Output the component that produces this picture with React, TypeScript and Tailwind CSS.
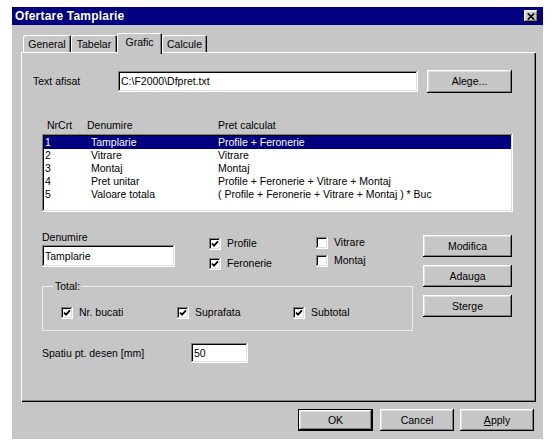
import type { ReactNode } from 'react'

// Win95-Optik: graue Fläche und 3D-Rahmen über Box-Shadows.
const FONT = "font-['Liberation_Sans',Arial,sans-serif]"
const DITHER = 'bg-[#c6c6c6]'
const RAISED =
  'shadow-[inset_-1px_-1px_#000,inset_1px_1px_#fff,inset_-2px_-2px_#808080,inset_2px_2px_#dfdfdf]'
const DEFAULT_BTN =
  'shadow-[inset_0_0_0_1px_#000,inset_-2px_-2px_#000,inset_2px_2px_#fff,inset_-3px_-3px_#808080,inset_3px_3px_#dfdfdf]'
const SUNKEN =
  'shadow-[inset_-1px_-1px_#fff,inset_1px_1px_#808080,inset_-2px_-2px_#dfdfdf,inset_2px_2px_#000]'

const ROWS: [string, string, string][] = [
  ['1', 'Tamplarie', 'Profile + Feronerie'],
  ['2', 'Vitrare', 'Vitrare'],
  ['3', 'Montaj', 'Montaj'],
  ['4', 'Pret unitar', 'Profile + Feronerie + Vitrare + Montaj'],
  ['5', 'Valoare totala', '( Profile + Feronerie + Vitrare + Montaj ) * Buc'],
]

function Button({ children, className = '', isDefault = false }: { children: ReactNode; className?: string; isDefault?: boolean }) {
  return (
    <div className={`flex items-center justify-center ${isDefault ? DEFAULT_BTN : RAISED} ${className}`}>
      {children}
    </div>
  )
}

function Check({ checked, label }: { checked: boolean; label: string }) {
  return (
    <div className="flex h-[13px] items-center">
      <span className={`grid h-[12px] w-[12px] shrink-0 place-items-center bg-white ${SUNKEN}`}>
        {checked && (
          <svg width="8" height="8" viewBox="0 0 8 8">
            <path d="M1 3.5 L3 5.6 L7 1.4" stroke="#000" strokeWidth="1.8" fill="none" />
          </svg>
        )}
      </span>
      <span className="ml-[6px] whitespace-nowrap">{label}</span>
    </div>
  )
}

function Tab({ label, active = false, w }: { label: string; active?: boolean; w: string }) {
  if (active) {
    return (
      <div
        className={`relative z-10 -mb-[2px] flex h-[21px] items-start justify-center rounded-t-[2px] pt-[3px] ${DITHER} ${w} shadow-[inset_1px_1px_#fff,inset_-1px_0_#000,inset_-2px_0_#808080]`}
      >
        {label}
      </div>
    )
  }
  return (
    <div
      className={`flex h-[17px] items-center justify-center rounded-t-[2px] pt-[1px] ${w} shadow-[inset_1px_1px_#fff,inset_-1px_0_#000,inset_-2px_0_#808080]`}
    >
      {label}
    </div>
  )
}

export default function App() {
  return (
    <div className={`min-h-[448px] bg-white pl-[12px] pt-[7px] text-[10.5px] leading-[13px] text-black ${FONT}`}>
      <div className={`h-[432px] w-[531px] ${DITHER}`}>
        {/* Titelleiste */}
        <div className="flex h-[18px] items-center justify-between bg-[#000080] pl-[3px] pr-[5px]">
          <span className="text-[12px] font-bold tracking-[0.2px] text-white">Ofertare Tamplarie</span>
          <div className={`grid h-[12px] w-[14px] place-items-center bg-[#c6c6c6] ${RAISED}`}>
            <svg width="8" height="7" viewBox="0 0 8 7">
              <path d="M0.8 0.5 L7.2 6.5 M7.2 0.5 L0.8 6.5" stroke="#000" strokeWidth="1.6" />
            </svg>
          </div>
        </div>

        <div className="px-[9px]">
          {/* Reiter */}
          <div className="mt-[8px] flex h-[19px] items-end pl-[2px]">
            <Tab label="General" w="w-[48px]" />
            <Tab label="Tabelar" w="w-[46px]" />
            <Tab label="Grafic" w="w-[45px]" active />
            <Tab label="Calcule" w="w-[45px]" />
          </div>

          {/* Reiter-Inhalt */}
          <div className="h-[350px] w-[515px] pt-[18px] shadow-[inset_1px_1px_#fff,inset_-1px_-1px_#000,inset_-2px_-2px_#808080]">
            <div className="flex h-[23px] items-center pl-[12px]">
              <span className="w-[85px]">Text afisat</span>
              <div className={`flex h-[21px] w-[300px] items-center bg-white pl-[3px] ${SUNKEN}`}>C:\F2000\Dfpret.txt</div>
              <Button className="ml-[9px] h-[23px] w-[85px]">Alege...</Button>
            </div>

            <div className="ml-[21px] mt-[26px] flex h-[12px] w-[471px] items-center pl-[5px] leading-[12px]">
              <span className="w-[40px]">NrCrt</span>
              <span className="w-[131px]">Denumire</span>
              <span>Pret calculat</span>
            </div>

            <div className={`ml-[21px] mt-[3px] h-[78px] w-[471px] bg-white p-[2px] ${SUNKEN}`}>
              {ROWS.map(([nr, den, pret], i) => (
                <div
                  key={nr}
                  className={`flex h-[13px] items-center pl-[1px] ${i === 0 ? 'bg-[#000080] text-white' : ''}`}
                >
                  <span className="w-[46px]">{nr}</span>
                  <span className="w-[127px]">{den}</span>
                  <span className="whitespace-nowrap">{pret}</span>
                </div>
              ))}
            </div>

            <div className="ml-[21px] mt-[19px] flex items-start">
              <div className="w-[371px]">
                <div className="flex h-[49px]">
                  <div className="w-[133px]">
                    <div className="h-[13px]">Denumire</div>
                    <div className={`mt-[1px] flex h-[22px] items-center bg-white pl-[3px] ${SUNKEN}`}>Tamplarie</div>
                  </div>
                  <div className="ml-[34px] flex w-[107px] flex-col gap-[7px] pt-[6px]">
                    <Check checked label="Profile" />
                    <Check checked label="Feronerie" />
                  </div>
                  <div className="flex flex-col gap-[5px] pt-[5px]">
                    <Check checked={false} label="Vitrare" />
                    <Check checked={false} label="Montaj" />
                  </div>
                </div>
                <fieldset className="h-[51px] border border-[#eeeeee]">
                  <legend className="ml-[10px] px-[2px] leading-[12px]">Total:</legend>
                  <div className="flex pl-[18px] pt-[14px]">
                    <div className="w-[116px]">
                      <Check checked label="Nr. bucati" />
                    </div>
                    <div className="w-[116px]">
                      <Check checked label="Suprafata" />
                    </div>
                    <Check checked label="Subtotal" />
                  </div>
                </fieldset>
              </div>

              <div className="ml-[10px] mt-[4px] flex flex-col gap-[8px]">
                <Button className="h-[22px] w-[89px]">Modifica</Button>
                <Button className="h-[22px] w-[89px]">Adauga</Button>
                <Button className="h-[22px] w-[89px]">Sterge</Button>
              </div>
            </div>

            <div className="ml-[21px] mt-[12px] flex h-[20px] items-center">
              <span className="w-[149px]">Spatiu pt. desen [mm]</span>
              <div className={`flex h-[20px] w-[57px] items-center bg-white pl-[3px] ${SUNKEN}`}>50</div>
            </div>
          </div>

          {/* Dialog-Schaltflächen */}
          <div className="mt-[7px] flex justify-end gap-[6px]">
            <Button isDefault className="mr-[1px] h-[22px] w-[75px]">
              OK
            </Button>
            <Button className="h-[22px] w-[74px]">Cancel</Button>
            <Button className="h-[22px] w-[74px]">
              <span>
                <span className="underline">A</span>pply
              </span>
            </Button>
          </div>
        </div>
      </div>
    </div>
  )
}
